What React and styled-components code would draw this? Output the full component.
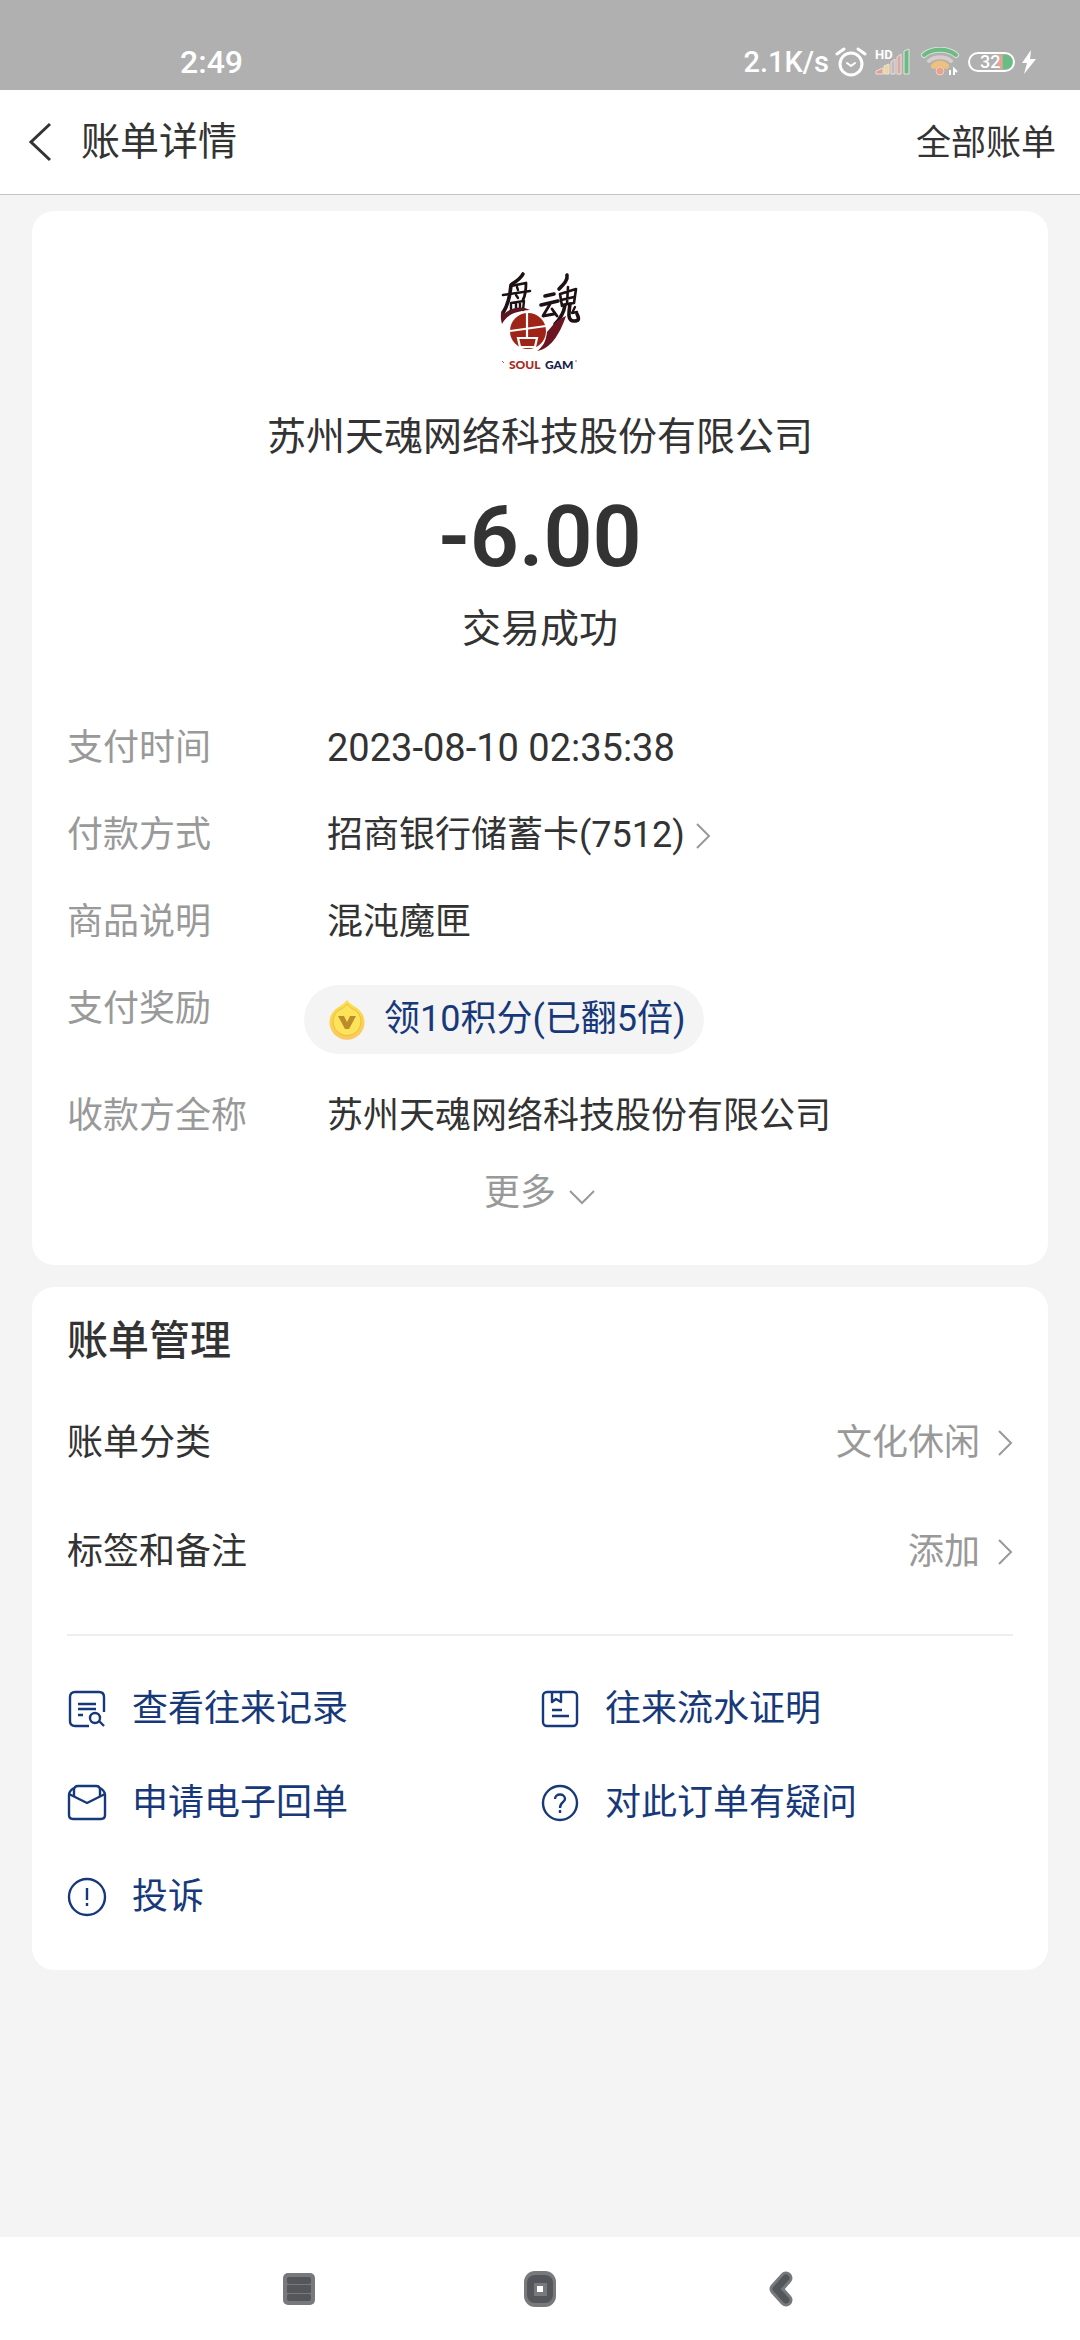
import React from 'react';
import styled, { createGlobalStyle } from 'styled-components';

const actions = [
  { label: '查看往来记录', icon: 'record' },
  { label: '往来流水证明', icon: 'proof' },
  { label: '申请电子回单', icon: 'mail' },
  { label: '对此订单有疑问', icon: 'question' },
  { label: '投诉', icon: 'complain' },
];

const SoulGameLogo = () => (
  <svg width="100" height="108" viewBox="0 0 100 108" role="img" aria-label="盘古魂 SOUL GAME">
    <g fill="none" stroke="#1d1114" strokeLinecap="round" strokeLinejoin="round">
      {/* left character */}
      <path d="M33 7 C31 11 27 14 22 17" strokeWidth="3.6" />
      <path d="M21 18 C20 30 18 38 13 46" strokeWidth="3.6" />
      <path d="M21 19 L36 16 C36 22 36 27 33 33" strokeWidth="2.8" />
      <path d="M13 28 L40 24" strokeWidth="2.6" />
      <path d="M27 20 L28 23 M26 28 L28 31" strokeWidth="2.4" />
      <path d="M21 36 L34 34 L33 43 M21 36 L21 44 M26 36 L26 43 M30 35 L30 43" strokeWidth="2.4" />
      {/* right character */}
      <path d="M55 29 L64 27" strokeWidth="3.6" />
      <path d="M51 38 L68 34" strokeWidth="3.6" />
      <path d="M60 37 C58 41 55 45 53 49 L64 47 M62 42 L67 49" strokeWidth="2.8" />
      <path d="M77 8 C78 13 74 17 69 22" strokeWidth="3.6" />
      <path d="M70 27 L72 39 M70 27 L86 22 L84 36 L72 38 M71 33 L84 30 M78 20 L77 37" strokeWidth="2.6" />
      <path d="M75 38 C74 45 71 51 65 57" strokeWidth="3.6" />
      <path d="M80 37 C79 45 77 54 84 54 C88 54 90 53 87 47" strokeWidth="3.6" />
      <path d="M85 40 L82 46 L87 45" strokeWidth="2.4" />
    </g>
    <path d="M12 43 C10 49 11 53 12 57 C16 49 24 44 40 43 C30 38 20 41 14 47 Z" fill="#5c1420" />
    <path d="M76 49 C65 53 62 60 57 65 C56 74 53 80 47 84 C60 82 69 69 76 49 Z" fill="#6b1522" />
    <circle cx="38" cy="64" r="18" fill="#9f2317" />
    <g fill="none" stroke="#fff" strokeWidth="2.2">
      <path d="M20 64 L56 59" />
      <path d="M37 46 L37 70" />
      <path d="M28 71 L47 71 L45 80 L30 80 Z" />
    </g>
    <text x="19" y="102" fontFamily="Lato, sans-serif" fontSize="12" fontWeight="900" fill="#a82a1c">
      SOUL
    </text>
    <text x="55" y="102" fontFamily="Lato, sans-serif" fontSize="12" fontWeight="900" fill="#152149">
      GAM
    </text>
    <path d="M12 94 L14 96 M85 94 L87 94" stroke="#8b6468" strokeWidth="1" />
  </svg>
);

const AlarmIcon = () => (
  <svg width="34" height="32" viewBox="0 0 34 32" fill="none" stroke="#fff" strokeLinecap="round">
    <circle cx="16" cy="18" r="11" strokeWidth="3" />
    <path d="M2 8 L9 3 M30 8 L23 3" strokeWidth="3" />
    <path d="M12 17 L16 20 L20 17" strokeWidth="2" strokeLinejoin="round" />
  </svg>
);

const SignalIcon = () => (
  <svg width="40" height="28" viewBox="0 0 40 28">
    <g stroke="#e6e3e0" strokeWidth="1">
      <path d="M1 26 V23 L8 20 V26 Z" fill="#ec9c8e" />
      <path d="M9 26 V18 L14 16 V26 Z" fill="#f0d596" />
      <path d="M16 26 V14 L20 11 V26 Z" fill="#c9b8b8" />
      <path d="M22 26 V9 L26 6 V26 Z" fill="#e0a79f" />
      <path d="M29 26 V3 L34 1 V26 Z" fill="#68bd82" />
    </g>
    <text x="0" y="11" fontFamily="Roboto, sans-serif" fontSize="13" fontWeight="700" fill="#fff">
      HD
    </text>
  </svg>
);

const WifiIcon = () => (
  <svg width="40" height="30" viewBox="0 0 40 30" fill="none">
    <path d="M3 8 C11 1 27 1 35 8" stroke="#d5e0d7" strokeWidth="6" strokeLinecap="round" />
    <path d="M3 8 C11 1 27 1 35 8" stroke="#6cba84" strokeWidth="4" strokeLinecap="round" />
    <path d="M8 14 C14 9 24 9 30 14" stroke="#d9cdcb" strokeWidth="4" strokeLinecap="round" />
    <path d="M13 19 C16 16 22 16 25 19" stroke="#efc27b" strokeWidth="6" strokeLinecap="round" />
    <circle cx="19" cy="24" r="4" fill="#e8a28f" stroke="#eed0c0" />
    <path d="M29 23 V28 M33 28 V22 L36 25" stroke="#fff" strokeWidth="2" />
  </svg>
);

const BatteryIcon = () => (
  <svg width="50" height="24" viewBox="0 0 50 24">
    <path d="M31 5 H35 V19 H31 Z" fill="#e7a292" />
    <path d="M36 5 H39 C48 5 48 19 39 19 H36 Z" fill="#68bd82" />
    <rect x="2" y="3" width="45" height="18" rx="9" fill="none" stroke="#fff" strokeWidth="2" />
    <text x="13" y="18" fontFamily="Roboto, sans-serif" fontSize="18" fontWeight="500" fill="#fff">
      32
    </text>
  </svg>
);

const BoltIcon = () => (
  <svg width="16" height="26" viewBox="0 0 16 26" fill="#fff">
    <path d="M10 1 L1 14 L6 14 L3 25 L15 10 L9 10 Z" />
  </svg>
);

const CoinIcon = () => (
  <svg width="36" height="40" viewBox="0 0 36 40">
    <defs>
      <linearGradient id="coin" x1="0" y1="0" x2="0" y2="1">
        <stop offset="0" stopColor="#fbe04c" />
        <stop offset="1" stopColor="#fbc75f" />
      </linearGradient>
    </defs>
    <path
      d="M18 0 C21 4 25 6 28 8 A17.5 17.5 0 1 1 8 8 C11 6 15 4 18 0 Z"
      fill="url(#coin)"
    />
    <path
      d="M18 4 C20 7 23 9 26 10 A14 14 0 1 1 10 10 C13 9 16 7 18 4 Z"
      fill="#fce35a"
      stroke="#eebb3d"
      strokeWidth="1"
    />
    <path d="M9 16 H15 L18 22 L21 16 H27 L20 29 H16 Z" fill="#bd8b29" />
  </svg>
);

const ActionIcon = ({ name }) => (
  <svg
    width="40"
    height="40"
    viewBox="0 0 40 40"
    fill="none"
    stroke="#17397a"
    strokeWidth="2.4"
    strokeLinejoin="round"
  >
    {name === 'record' && (
      <>
        <path d="M22 37 H8 Q3 37 3 32 V8 Q3 3 8 3 H32 Q37 3 37 8 V23" />
        <path d="M11 15 H29 M11 20 H29 M11 26 H16" />
        <circle cx="28" cy="29" r="5" />
        <path d="M32 32 L37 37" />
      </>
    )}
    {name === 'proof' && (
      <>
        <rect x="3" y="3" width="34" height="34" rx="4" />
        <path d="M12 3 V13 L16 10 L21 13 V3" />
        <path d="M12 21 H22 M12 27 H29" />
      </>
    )}
    {name === 'mail' && (
      <>
        <path d="M7 5 Q2 8 2 12 V32 Q2 36 6 36 H34 Q38 36 38 32 V12 Q38 8 33 5" />
        <path d="M7 14 V7 Q7 3 11 3 H29 Q33 3 33 7 V14" />
        <path d="M2 11 L20 20 L38 11" />
      </>
    )}
    {name === 'question' && (
      <>
        <circle cx="20" cy="20" r="17" />
        <path d="M15 16 C15 10 25 10 25 16 C25 19 20 19 20 25" />
        <path d="M20 27 V30" />
      </>
    )}
    {name === 'complain' && (
      <>
        <circle cx="20" cy="20" r="18" />
        <path d="M20 11 V23 M20 26 V29" />
      </>
    )}
  </svg>
);

const Chevron = () => (
  <svg width="18" height="28" viewBox="0 0 18 28" fill="none" stroke="#999" strokeWidth="2">
    <path d="M4 2 L16 14 L4 26" />
  </svg>
);

const App = () => {
  return (
    <>
      <GlobalStyle />
      <Page>
        <StatusBar>
          <Clock>2:49</Clock>
          <StatusIcons>
            <span>2.1K/s</span>
            <AlarmIcon />
            <SignalIcon />
            <WifiIcon />
            <Battery>
              <BatteryIcon />
              <BoltIcon />
            </Battery>
          </StatusIcons>
        </StatusBar>

        <Header>
          <BackButton aria-label="返回">
            <svg width="26" height="42" viewBox="0 0 26 42" fill="none" stroke="#333" strokeWidth="3">
              <path d="M23 3 L4 21 L23 39" />
            </svg>
          </BackButton>
          <HeaderTitle>账单详情</HeaderTitle>
          <AllBills href="#all">全部账单</AllBills>
        </Header>

        <Main>
          <BillCard>
            <SoulGameLogo />
            <Merchant>苏州天魂网络科技股份有限公司</Merchant>
            <Amount>-6.00</Amount>
            <BillState>交易成功</BillState>

            <DetailList>
              <DetailRow>
                <dt>支付时间</dt>
                <DetailTime>2023-08-10 02:35:38</DetailTime>
              </DetailRow>
              <DetailRow>
                <dt>付款方式</dt>
                <DetailValue>
                  <PayMethod>
                    招商银行储蓄卡(7512)
                    <Chevron />
                  </PayMethod>
                </DetailValue>
              </DetailRow>
              <DetailRow>
                <dt>商品说明</dt>
                <DetailValue>混沌魔匣</DetailValue>
              </DetailRow>
              <DetailRow>
                <dt>支付奖励</dt>
                <DetailValue>
                  <RewardButton>
                    <CoinIcon />
                    领10积分(已翻5倍)
                  </RewardButton>
                </DetailValue>
              </DetailRow>
              <DetailRow>
                <dt>收款方全称</dt>
                <DetailValue>苏州天魂网络科技股份有限公司</DetailValue>
              </DetailRow>
            </DetailList>

            <MoreButton>
              更多
              <svg width="28" height="28" viewBox="0 0 28 28" fill="none" stroke="#999" strokeWidth="2">
                <path d="M2 12 L14 24 L26 12" />
              </svg>
            </MoreButton>
          </BillCard>

          <ManageCard>
            <ManageTitle>账单管理</ManageTitle>
            <ManageRow>
              账单分类
              <ManageValue>
                文化休闲
                <Chevron />
              </ManageValue>
            </ManageRow>
            <ManageRow>
              标签和备注
              <ManageValue>
                添加
                <Chevron />
              </ManageValue>
            </ManageRow>
            <Divider />
            <ActionGrid>
              {actions.map((action) => (
                <ActionLink key={action.icon} href={`#${action.icon}`}>
                  <ActionIcon name={action.icon} />
                  {action.label}
                </ActionLink>
              ))}
            </ActionGrid>
          </ManageCard>
        </Main>

        <NavBar>
          <NavButton aria-label="最近任务">
            <svg width="34" height="36" viewBox="0 0 34 36">
              <rect x="1" y="2" width="32" height="32" rx="5" fill="#77797b" />
              <g fill="#53575c">
                <rect x="5" y="6" width="24" height="7" rx="2" />
                <rect x="5" y="14" width="24" height="8" rx="1" />
                <rect x="5" y="23" width="24" height="7" rx="2" />
              </g>
            </svg>
          </NavButton>
          <NavButton aria-label="主屏幕">
            <svg width="34" height="36" viewBox="0 0 34 36">
              <rect x="1" y="0" width="32" height="36" rx="11" fill="#77797b" />
              <rect x="4" y="4" width="26" height="28" rx="8" fill="#53575c" />
              <rect x="11" y="12" width="13" height="13" fill="#77797b" />
              <rect x="14" y="15" width="6" height="6" fill="#fff" />
            </svg>
          </NavButton>
          <NavButton aria-label="后退">
            <svg
              width="26"
              height="38"
              viewBox="0 0 26 38"
              fill="none"
              strokeLinecap="round"
              strokeLinejoin="round"
            >
              <path d="M18 8 L8 19 L18 30" stroke="#77797b" strokeWidth="13" />
              <path d="M18 8 L8 19 L18 30" stroke="#53575c" strokeWidth="7" />
            </svg>
          </NavButton>
        </NavBar>
      </Page>
    </>
  );
};

const GlobalStyle = createGlobalStyle`
  * {
    box-sizing: border-box;
  }
  body {
    margin: 0;
    background-color: #f4f4f4;
    color: #333;
    font-family: Roboto, 'Noto Sans CJK SC', sans-serif;
    font-size: 36px;
    line-height: 48px;
  }
  button {
    padding: 0;
    border: none;
    background-color: transparent;
    color: inherit;
    font: inherit;
    cursor: pointer;
  }
  a {
    color: inherit;
    text-decoration: none;
  }
  svg {
    flex-shrink: 0;
  }
`;

const Page = styled.div`
  min-height: 100vh;
  display: flex;
  flex-direction: column;
`;

const StatusBar = styled.div`
  height: 90px;
  padding: 34px 43px 0 180px;
  display: flex;
  justify-content: space-between;
  align-items: flex-start;
  background-color: #b0b0b0;
  color: #fff;
  font-size: 29px;
  font-weight: 500;
  line-height: 56px;
`;

const Clock = styled.div`
  font-size: 32px;
`;

const StatusIcons = styled.div`
  height: 56px;
  display: flex;
  align-items: center;
  gap: 6px;
`;

const Battery = styled.div`
  display: flex;
  align-items: center;
  gap: 4px;
`;

const Header = styled.header`
  height: 105px;
  padding: 0 24px 0 27px;
  display: flex;
  align-items: center;
  background-color: #fff;
  border-bottom: 1px solid #c4c4c4;
`;

const BackButton = styled.button`
  width: 54px;
  height: 48px;
  display: flex;
  align-items: center;
`;

const HeaderTitle = styled.h1`
  margin: 0;
  flex: 1;
  font-size: 39px;
  font-weight: 400;
`;

const AllBills = styled.a`
  padding-top: 4px;
  font-size: 35px;
`;

const Main = styled.main`
  flex: 1;
  padding: 16px 32px;
  display: flex;
  flex-direction: column;
  gap: 22px;
`;

const Card = styled.section`
  padding: 0 35px;
  background-color: #fff;
  border-radius: 22px;
`;

const BillCard = styled(Card)`
  padding-top: 56px;
  padding-bottom: 48px;
  display: flex;
  flex-direction: column;
  align-items: center;
`;

const Merchant = styled.div`
  margin-top: 38px;
  font-size: 39px;
`;

const Amount = styled.div`
  margin-top: 32px;
  font-size: 86px;
  font-weight: 600;
  line-height: 88px;
`;

const BillState = styled.div`
  margin-top: 24px;
  font-size: 39px;
`;

const DetailList = styled.dl`
  width: 100%;
  margin: 71px 0 0;
  display: flex;
  flex-direction: column;
  gap: 38px;
  line-height: 49px;
`;

const DetailRow = styled.div`
  display: grid;
  grid-template-columns: 260px 1fr;
  color: #999;
`;

const DetailValue = styled.dd`
  margin: 0;
  color: #333;
`;

const DetailTime = styled(DetailValue)`
  font-size: 38px;
`;

const PayMethod = styled.button`
  display: flex;
  align-items: center;
  gap: 8px;
`;

const RewardButton = styled.button`
  height: 69px;
  margin-left: -23px;
  padding: 0 18px 0 25px;
  display: flex;
  align-items: center;
  gap: 19px;
  border-radius: 35px;
  background-color: #f4f4f4;
  color: #17397a;
`;

const MoreButton = styled.button`
  margin-top: 28px;
  display: flex;
  align-items: center;
  gap: 12px;
  color: #999;
`;

const ManageCard = styled(Card)`
  padding-top: 30px;
  padding-bottom: 26px;
`;

const ManageTitle = styled.h2`
  margin: 0 0 23px;
  font-size: 41px;
  font-weight: 500;
`;

const ManageRow = styled.button`
  width: 100%;
  height: 109px;
  display: flex;
  justify-content: space-between;
  align-items: center;
`;

const ManageValue = styled.span`
  display: flex;
  align-items: center;
  gap: 15px;
  color: #999;
`;

const Divider = styled.hr`
  height: 2px;
  margin: 28px 0 26px;
  border: none;
  background-color: #eee;
`;

const ActionGrid = styled.nav`
  display: grid;
  grid-template-columns: 1fr 1fr;
  grid-auto-rows: 94px;
`;

const ActionLink = styled.a`
  display: flex;
  align-items: center;
  gap: 25px;
  color: #17397a;
`;

const NavBar = styled.footer`
  height: 103px;
  display: flex;
  justify-content: center;
  background-color: #fff;
`;

const NavButton = styled.button`
  width: 22.3%;
  display: flex;
  justify-content: center;
  align-items: center;
`;

export default App;
